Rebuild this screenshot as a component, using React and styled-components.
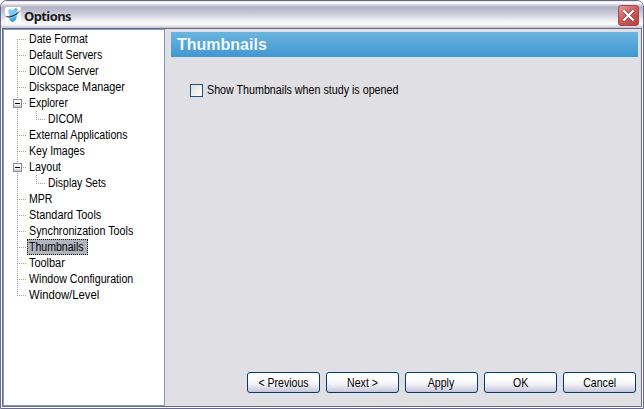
import React from 'react';
import styled, { createGlobalStyle } from 'styled-components';

const Global = createGlobalStyle`
  * { box-sizing: border-box; }
  html, body { margin: 0; padding: 0; overflow: hidden; background: #fff; }
  body { font-family: "Liberation Sans", Arial, sans-serif; font-size: 12px; color: #000; }
`;

const Window = styled.div`
  width: 644px;
  height: 409px;
  display: flex;
  flex-direction: column;
  border: 1px solid #6a6a8c;
  border-radius: 7px 7px 0 0;
  background: #fff;
  overflow: hidden;
`;

const TitleBar = styled.header`
  height: 27px;
  flex: none;
  display: flex;
  align-items: center;
  padding: 2px 4px 0 4px;
  background: linear-gradient(#c8c8d6 0, #ffffff 1px, #ffffff 2px, #d2d2e0 4px, #b4b4c8 6px, #bcbccd 9px, #d2d2df 14px, #ececf2 19px, #fbfbfd 23px, #e4e4ec 25px, #c0c0ce 27px);
`;

const AppIcon = styled.svg`
  width: 16px;
  height: 16px;
  margin-top: -1px;
  flex: none;
`;

const Title = styled.h1`
  flex: 1;
  margin: 0 0 0 3px;
  font: bold 13px/18px "Noto Sans", sans-serif;
  letter-spacing: -0.6px;
  padding-top: 1px;
  color: #1c1c20;
`;

const CloseButton = styled.button`
  width: 21px;
  height: 21px;
  padding: 0;
  border: 1px solid #a8464c;
  border-radius: 3px;
  background: linear-gradient(145deg, #dda09c, #cd5d5c 45%, #b63c40);
  display: flex;
  align-items: center;
  justify-content: center;
`;

const Body = styled.div`
  flex: 1;
  min-height: 0;
  display: flex;
  margin: 0 1px 1px;
  border: 1px solid #6a6a8c;
  background: #e0dfe3;
`;

const Tree = styled.ul`
  width: 162px;
  flex: none;
  margin: 0;
  padding: 1px 0 0 10px;
  list-style: none;
  background: #fff;
  border: 1px solid #7f9db9;
`;

const TreeItem = styled.li`
  height: 16px;
  display: flex;
  align-items: center;
`;

const Branch = styled.svg`
  width: ${p => (p.$nested ? 32 : 13)}px;
  height: 16px;
  flex: none;
  overflow: visible;
`;

const ItemLabel = styled.span`
  width: ${p => p.$width + 7}px;
  height: 16px;
  padding-left: 1px;
  line-height: 14px;
  white-space: nowrap;
  border: 1px ${p => (p.$selected ? 'dotted #111' : 'solid transparent')};
  background: ${p => (p.$selected ? '#b2b4bf' : 'transparent')};
`;

/* Condensed lettering of the classic system UI face. */
const Narrow = styled.span`
  display: inline-block;
  white-space: nowrap;
  transform: scaleX(${p => p.$scale || 0.88});
  transform-origin: ${p => p.$origin || 'left'} center;
`;

const Page = styled.main`
  flex: 1;
  min-width: 0;
  display: flex;
  flex-direction: column;
  padding: 3px 3px 13px 6px;
`;

const PageHeading = styled.h2`
  height: 25px;
  margin: 0;
  padding-left: 6px;
  font: bold 16px/25px "Liberation Sans", Arial, sans-serif;
  color: #f0f8ff;
  background: linear-gradient(#6cb4de, #3f98d2);
`;

const CheckRow = styled.label`
  display: flex;
  align-items: center;
  margin: 27px 0 0 19px;
  height: 13px;
  line-height: 13px;
`;

const CheckBox = styled.span`
  width: 13px;
  height: 13px;
  flex: none;
  margin-right: 4px;
  border: 1px solid #1c5180;
  background: linear-gradient(135deg, #dcdcd7, #fff);
`;

const Actions = styled.footer`
  margin-top: auto;
  display: flex;
  justify-content: flex-end;
  gap: 6px;
  padding-right: 2px;
`;

const ActionButton = styled.button`
  width: 73px;
  height: 21px;
  padding: 0;
  font: 12px/18px "Liberation Sans", Arial, sans-serif;
  color: #000;
  border: 1px solid #003c74;
  border-radius: 3px;
  background: linear-gradient(#fff 0, #fdfdfe 35%, #f0f0f6 60%, #d2d0e0 90%, #c6c5d7 100%);
`;

const items = [
  { label: 'Date Format', scale: 0.88 },
  { label: 'Default Servers', scale: 0.885 },
  { label: 'DICOM Server', scale: 0.885 },
  { label: 'Diskspace Manager', scale: 0.905 },
  { label: 'Explorer', scale: 0.87, open: true },
  { label: 'DICOM', scale: 0.87, nested: true },
  { label: 'External Applications', scale: 0.885 },
  { label: 'Key Images', scale: 0.88 },
  { label: 'Layout', scale: 0.89, open: true },
  { label: 'Display Sets', scale: 0.87, nested: true },
  { label: 'MPR', scale: 0.88 },
  { label: 'Standard Tools', scale: 0.905 },
  { label: 'Synchronization Tools', scale: 0.895 },
  { label: 'Thumbnails', scale: 0.88, selected: true },
  { label: 'Toolbar', scale: 0.91 },
  { label: 'Window Configuration', scale: 0.888 },
  { label: 'Window/Level', scale: 0.94 },
];

const dots = { stroke: '#a0a0a0', strokeDasharray: '1 1', fill: 'none' };

function Lines({ item, first, last }) {
  return (
    <Branch $nested={item.nested} viewBox={`0 0 ${item.nested ? 32 : 13} 16`} shapeRendering="crispEdges">
      <path d={`M3.5 ${first ? 8 : 0}V${last ? 8 : 16}`} {...dots} />
      {item.nested ? <path d="M22.5 0V8M22 8.5H32" {...dots} /> : <path d="M3 8.5H12" {...dots} />}
      {item.open && (
        <g>
          <rect x="-0.5" y="4.5" width="8" height="8" fill="#f7f6f7" stroke="#7b90a8" />
          <path d="M0 11H7" stroke="#d6d2cc" strokeWidth="2" />
          <path d="M1 8.5H6" stroke="#000" />
        </g>
      )}
    </Branch>
  );
}

export default function App() {
  return (
    <>
      <Global />
      <Window>
        <TitleBar>
          <AppIcon viewBox="0 0 16 16">
            <rect width="16" height="16" rx="1.5" fill="#fdfdff" />
            <path d="M3.2 3.5l2-1.5 2.5 1L10 2l2.8 3-.8 4-3 2.2-4.2-1.4-1-3z" fill="#7ccdf4" />
            <circle cx="10.8" cy="2.6" r="1.6" fill="#58b9ee" />
            <path d="M4 11.5l4-.6 3.8-2-.8 3.6-3 2.7-2.5-1z" fill="#3ba6e6" />
            <path d="M.4 9C3.4 10.6 9.6 8.4 15.8 3.4 10 9.6 3.2 12.4.4 9z" fill="#203040" stroke="#203040" strokeWidth=".3" />
          </AppIcon>
          <Title>Options</Title>
          <CloseButton aria-label="Close">
            <svg width="13" height="13" viewBox="0 0 13 13">
              <path d="M2 2l9 9M11 2l-9 9" stroke="#7e3034" strokeWidth="3.4" />
              <path d="M1.5 1.5l10 10M11.5 1.5l-10 10" stroke="#fff" strokeWidth="2.4" />
            </svg>
          </CloseButton>
        </TitleBar>
        <Body>
          <Tree>
            {items.map((item, i) => (
              <TreeItem key={item.label}>
                <Lines item={item} first={i === 0} last={i === items.length - 1} />
                <ItemLabel $selected={item.selected} $width={item.selected ? 54 : 110}>
                  <Narrow $scale={item.scale}>{item.label}</Narrow>
                </ItemLabel>
              </TreeItem>
            ))}
          </Tree>
          <Page>
            <PageHeading>Thumbnails</PageHeading>
            <CheckRow>
              <CheckBox />
              <Narrow $scale={0.892}>Show Thumbnails when study is opened</Narrow>
            </CheckRow>
            <Actions>
              {['< Previous', 'Next >', 'Apply', 'OK', 'Cancel'].map(label => (
                <ActionButton key={label}>
                  <Narrow $origin="center">{label}</Narrow>
                </ActionButton>
              ))}
            </Actions>
          </Page>
        </Body>
      </Window>
    </>
  );
}
